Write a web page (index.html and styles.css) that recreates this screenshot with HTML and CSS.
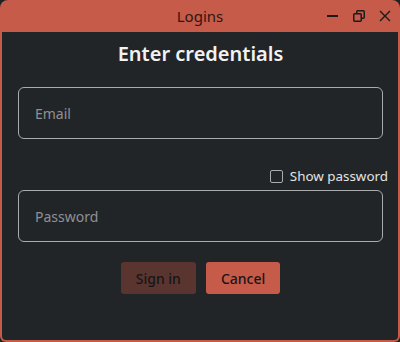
FILE: index.html
```html
<!DOCTYPE html>
<html lang="en">
<head>
  <meta charset="UTF-8">
  <meta name="viewport" content="width=device-width, initial-scale=1.0">
  <title>Logins</title>
  <link rel="stylesheet" href="styles.css">
</head>
<body>

<div class="login-window">
  <header class="login-titlebar">
    <div class="login-title">Logins</div>
    <div class="login-controls">
      <svg class="login-control" viewBox="0 0 12 12" width="12" height="12">
        <rect x="0" y="5" width="11" height="2" fill="#1b1b1b" />
      </svg>
      <svg class="login-control" viewBox="0 0 12 12" width="12" height="12">
        <rect x="3.75" y="0.75" width="7.5" height="7.5" rx="1" fill="none" stroke="#1b1b1b" stroke-width="1.5" />
        <rect x="0.75" y="3.75" width="7.5" height="7.5" rx="1" fill="#c65b4a" stroke="#1b1b1b" stroke-width="1.5" />
      </svg>
      <svg class="login-control" viewBox="0 0 12 12" width="12" height="12">
        <path d="M1 1 L11 11 M11 1 L1 11" stroke="#1b1b1b" stroke-width="1.4" fill="none" />
      </svg>
    </div>
  </header>

  <div class="login-content">
    <h2>Enter credentials</h2>
    <div class="login-field">
      <input type="text" placeholder="Email">
    </div>
    <label class="login-show">
      <span class="login-check"></span>
      Show password
    </label>
    <div class="login-field">
      <input type="password" placeholder="Password">
    </div>
    <div class="login-buttons">
      <button class="login-signin" disabled>Sign in</button>
      <button class="login-cancel">Cancel</button>
    </div>
  </div>
</div>

</body>
</html>
```

FILE: styles.css
```css
* {
  margin: 0;
  padding: 0;
  box-sizing: border-box;
}

html,
body {
  background-color: #1f2124;
}

body {
  font-family: "Noto Sans", "Open Sans", sans-serif;
  width: 400px;
  height: 342px;
}

.login-window {
  width: 400px;
  height: 342px;
  background-color: #c65b4a;
  border-radius: 8px 8px 6px 6px;
  padding: 0 2px 2px 2px;
  display: flex;
  flex-direction: column;
}

.login-titlebar {
  height: 32px;
  display: grid;
  grid-template-columns: 1fr auto 1fr;
  align-items: center;
}

.login-title {
  grid-column: 2;
  font-size: 15px;
  color: #2e1611;
  padding-bottom: 1px;
}

.login-controls {
  grid-column: 3;
  justify-self: end;
  display: flex;
  align-items: center;
  gap: 14px;
  padding-right: 7px;
  padding-bottom: 1px;
}

.login-content {
  flex-grow: 1;
  background-color: #222528;
  border-radius: 0 0 4px 4px;
  padding: 8px 15px 0 16px;
  display: flex;
  flex-direction: column;
}

h2 {
  font-size: 20px;
  font-weight: 600;
  color: #f2f2f2;
  text-align: center;
  line-height: 28px;
  margin-bottom: 19px;
}

.login-field input {
  width: 100%;
  height: 52px;
  background-color: #222528;
  border: 1.5px solid #a9abad;
  border-radius: 6px;
  padding: 0 16px;
  font-family: inherit;
  font-size: 14px;
  color: #e6e6e6;
  outline: none;
}

.login-field input::placeholder {
  color: #8e9194;
}

.login-show {
  align-self: flex-end;
  margin-right: -5px;
  margin-top: 28px;
  margin-bottom: 4px;
  display: flex;
  align-items: center;
  gap: 7px;
  font-size: 13.4px;
  color: #e4e4e4;
  line-height: 19px;
}

.login-check {
  width: 13px;
  height: 13px;
  border: 1.5px solid #a9abad;
  border-radius: 2px;
}

.login-buttons {
  display: flex;
  justify-content: center;
  gap: 10px;
  margin-top: 20px;
}

.login-buttons button {
  height: 32px;
  padding: 0 15px;
  border: none;
  border-radius: 3px;
  font-family: inherit;
  font-size: 14px;
  font-weight: 500;
  color: #161616;
}

.login-signin {
  background-color: #5a3530;
  color: #262020;
}

.login-cancel {
  background-color: #c65b4a;
  border: 1px solid #d46a58;
}
```
